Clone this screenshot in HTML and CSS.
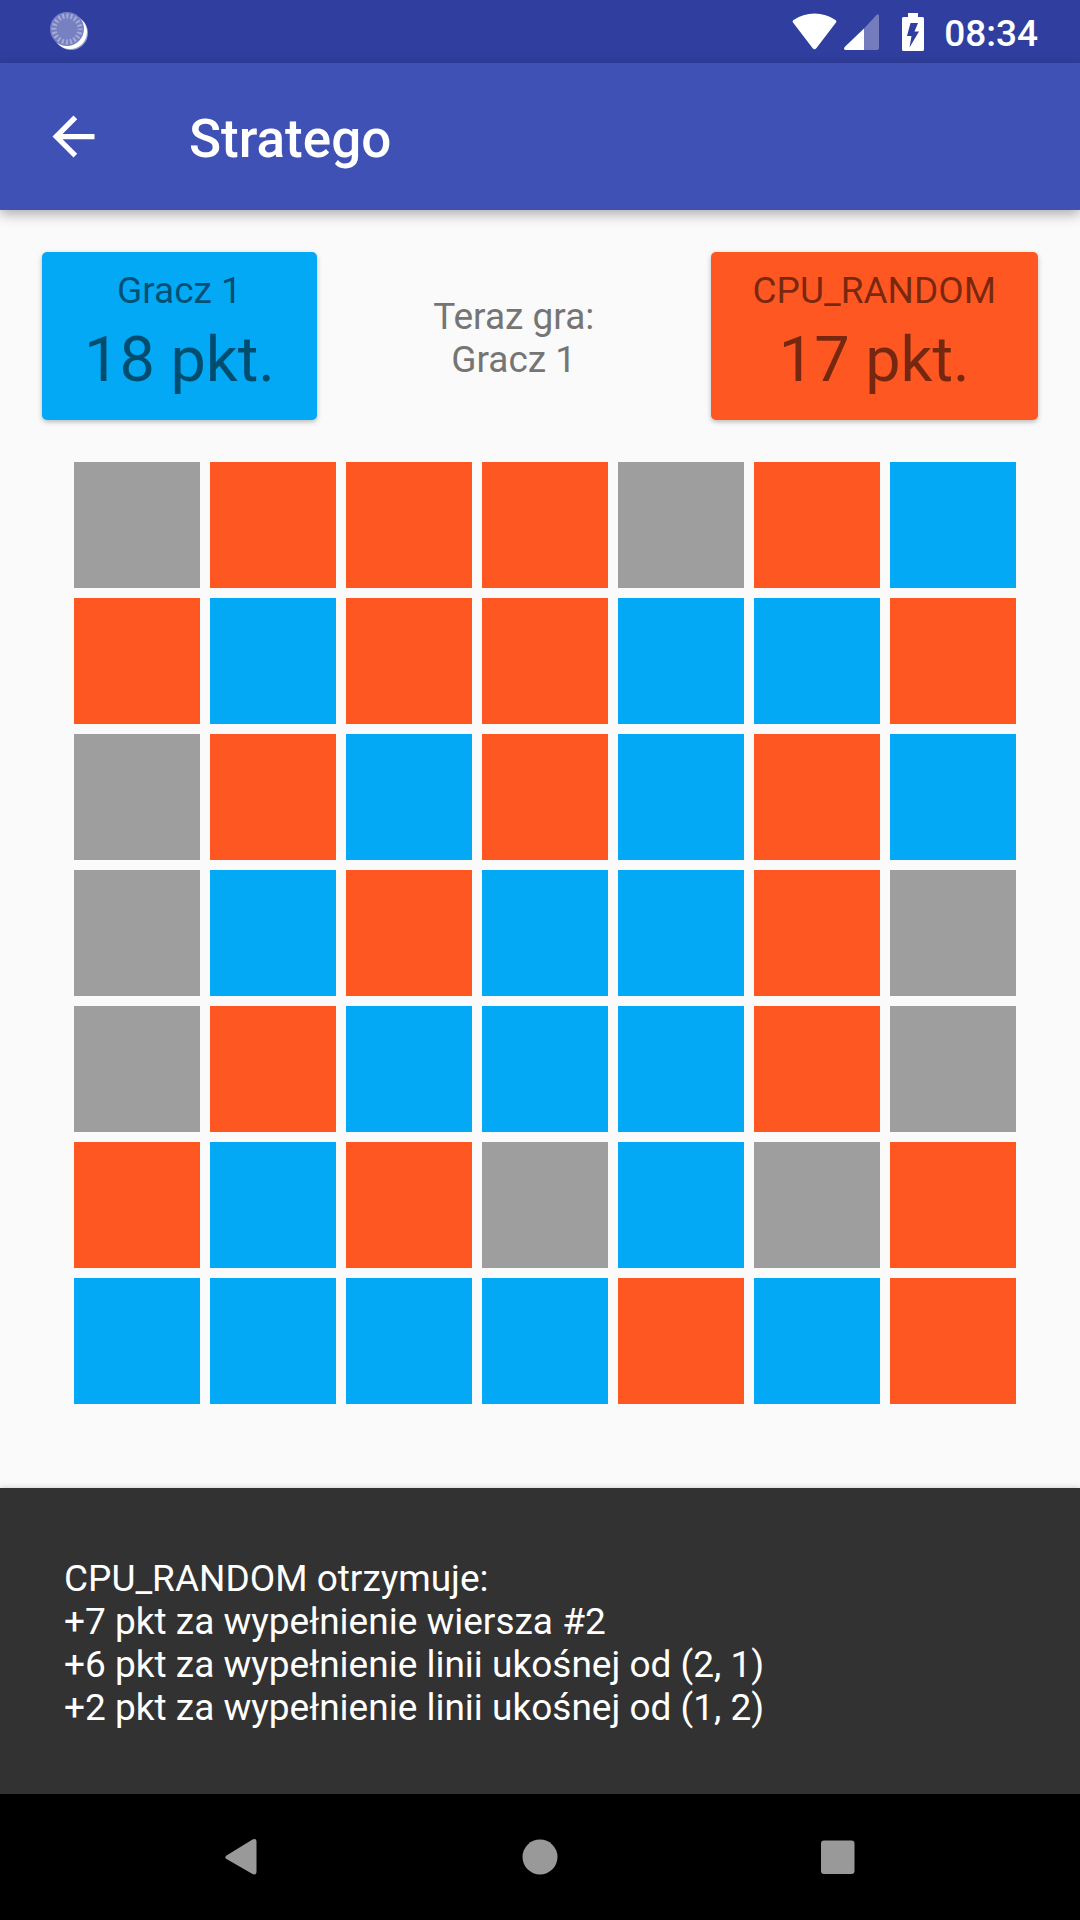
FILE: index.html
```html
<!DOCTYPE html>
<html lang="pl">
<head>
<meta charset="utf-8">
<meta name="viewport" content="width=device-width, initial-scale=1">
<title>Stratego</title>
<link rel="stylesheet" href="styles.css">
</head>
<body>
<div class="status-bar">
  <svg class="status-sync" viewBox="0 0 40 40" aria-hidden="true">
    <circle cx="21" cy="21" r="17" fill="#9aa2d2"/>
    <circle cx="20" cy="20" r="17" fill="#fff"/>
    <circle cx="17" cy="17" r="17" fill="#7780c1"/>
    <circle cx="17" cy="17" r="13" fill="none" stroke="#a5abd7" stroke-width="5" stroke-dasharray="2 2.084" stroke-dashoffset="1"/>
  </svg>
  <div class="status-icons">
    <svg class="wifi" viewBox="0 0 45 37" aria-hidden="true"><path fill="#fff" d="M1 9.500Q0 8 1.500 7Q11 .5 22.500 .5T43.500 7Q45 8 44 9.500L24.500 35Q22.500 37.500 20.500 35Z"/></svg>
    <svg class="signal" viewBox="0 0 35 36" aria-hidden="true"><path fill="#757cbe" d="M20 14.500 32.500 1Q35 -1 35 2V34Q35 36 33 36H20Z"/><path fill="#fff" d="M20 14.500V36H1.500Q-1 35.500 .7 33Z"/></svg>
    <svg class="battery" viewBox="0 0 22 38" aria-hidden="true"><path fill="#fff" d="M6 0H16V4H20.500Q22 4 22 5.500V36.500Q22 38 20.500 38H1.500Q0 38 0 36.500V5.500Q0 4 1.500 4H6Z"/><path fill="#303f9f" d="M8.500 10H16L12.500 18.500H17L7.500 34.500 9.500 23H5Z"/></svg>
    <time class="clock">08:34</time>
  </div>
</div>

<header class="app-bar">
  <button class="back" type="button" aria-label="Wstecz">
    <svg viewBox="0 0 24 24" aria-hidden="true"><path fill="#fff" d="M20 11H7.830l5.590-5.590L12 4l-8 8 8 8 1.410-1.410L7.830 13H20z"/></svg>
  </button>
  <h1 class="title">Stratego</h1>
</header>

<main class="game">
  <section class="scores">
    <div class="score score-blue">
      <span class="score-name">Gracz 1</span>
      <span class="score-points">18 pkt.</span>
    </div>
    <p class="turn">Teraz gra:<br>Gracz 1</p>
    <div class="score score-orange">
      <span class="score-name">CPU_RANDOM</span>
      <span class="score-points">17 pkt.</span>
    </div>
  </section>
  <div class="board" id="board"></div>
</main>

<div class="snackbar" role="status">
  <p>CPU_RANDOM otrzymuje:<br>+7 pkt za wypełnienie wiersza #2<br>+6 pkt za wypełnienie linii ukośnej od (2, 1)<br>+2 pkt za wypełnienie linii ukośnej od (1, 2)</p>
</div>

<nav class="nav-bar">
  <button type="button" aria-label="Wstecz"><svg viewBox="0 0 63 63" aria-hidden="true"><path fill="#999" d="M16.500 29.500 42.500 13.500Q46.500 12 46.500 15.500V45.500Q46.500 49.500 42.500 48L16.500 33Q14 31.500 16.500 29.500Z"/></svg></button>
  <button type="button" aria-label="Ekran główny"><svg viewBox="0 0 63 63" aria-hidden="true"><circle cx="31" cy="31" r="17.500" fill="#999"/></svg></button>
  <button type="button" aria-label="Ostatnie"><svg viewBox="0 0 63 63" aria-hidden="true"><rect x="14" y="14.500" width="33.500" height="33.500" rx="3" fill="#999"/></svg></button>
</nav>
<script src="board.js"></script>
</body>
</html>
```
FILE: styles.css
```css
* {
  box-sizing: border-box;
}

body {
  margin: 0;
  min-height: 100vh;
  display: flex;
  flex-direction: column;
  background: #fafafa;
  font-family: Roboto, "Noto Sans", sans-serif;
  font-size: 37px;
  line-height: 43px;
}

h1,
p {
  margin: 0;
}

button {
  display: block;
  margin: 0;
  padding: 0;
  border: 0;
  background: none;
}

svg {
  display: block;
}

.status-bar {
  display: flex;
  align-items: center;
  justify-content: space-between;
  height: 63px;
  padding: 0 42px 0 50px;
  background: #303f9f;
}

.status-sync {
  width: 40px;
  height: 40px;
}

.status-icons {
  display: flex;
  align-items: center;
}

.wifi {
  width: 45px;
  height: 37px;
  margin-right: 7px;
}

.signal {
  width: 35px;
  height: 36px;
  margin-right: 23px;
}

.battery {
  width: 22px;
  height: 38px;
  margin-right: 20px;
}

.clock {
  padding-top: 4px;
  color: #fff;
  font-weight: 500;
}

.app-bar {
  position: relative;
  display: flex;
  align-items: center;
  gap: 84px;
  height: 147px;
  padding: 0 42px;
  background: #3f51b5;
  box-shadow: 0 4px 12px rgba(0, 0, 0, 0.32);
}

.back,
.back svg {
  width: 63px;
  height: 63px;
}

.title {
  padding-top: 4px;
  color: #fff;
  font-size: 53px;
  font-weight: 500;
  line-height: 62px;
}

.game {
  flex: 1;
  padding-bottom: 84px;
}

.scores {
  display: flex;
  padding: 42px;
}

.score {
  display: flex;
  flex-direction: column;
  gap: 11px;
  padding: 17px 42px 23px;
  border-radius: 5px;
  box-shadow: 0 2px 5px rgba(0, 0, 0, 0.26);
  color: rgba(0, 0, 0, 0.54);
  text-align: center;
}

.score-blue {
  background: #03a9f4;
}

.score-orange {
  background: #ff5722;
}

.score-points {
  font-size: 63px;
  line-height: 74px;
}

.turn {
  flex: 1;
  align-self: center;
  padding-top: 3px;
  color: #757575;
  text-align: center;
}

.board {
  display: grid;
  grid-template-columns: repeat(7, 1fr);
  gap: 10px;
  padding: 0 64px 0 74px;
}

.tile {
  aspect-ratio: 1;
  background: #9e9e9e;
}

.tile-blue {
  background: #03a9f4;
}

.tile-orange {
  background: #ff5722;
}

.snackbar {
  padding: 69px 64px 65px;
  background: #323232;
  box-shadow: 0 0 6px rgba(0, 0, 0, 0.2);
  color: #fff;
}

.nav-bar {
  display: flex;
  height: 126px;
  padding: 0 92px;
  background: #000;
}

.nav-bar button {
  flex: 1;
}

.nav-bar svg {
  width: 63px;
  height: 63px;
  margin: 0 auto;
}
```
FILE: board.js
```js
// One string per row: "." is free, "B" is blue, "O" is orange.
const rows = [
  ".OOO.OB",
  "OBOOBBO",
  ".OBOBOB",
  ".BOBBO.",
  ".OBBBO.",
  "OBO.B.O",
  "BBBBOBO"
];
const tileClass = { ".": "tile", B: "tile tile-blue", O: "tile tile-orange" };
const board = document.getElementById("board");

rows.forEach((row, y) => {
  [...row].forEach((owner, x) => {
    const tile = document.createElement("button");
    tile.type = "button";
    tile.className = tileClass[owner];
    tile.setAttribute("aria-label", `Pole (${y + 1}, ${x + 1})`);
    board.append(tile);
  });
});
```
